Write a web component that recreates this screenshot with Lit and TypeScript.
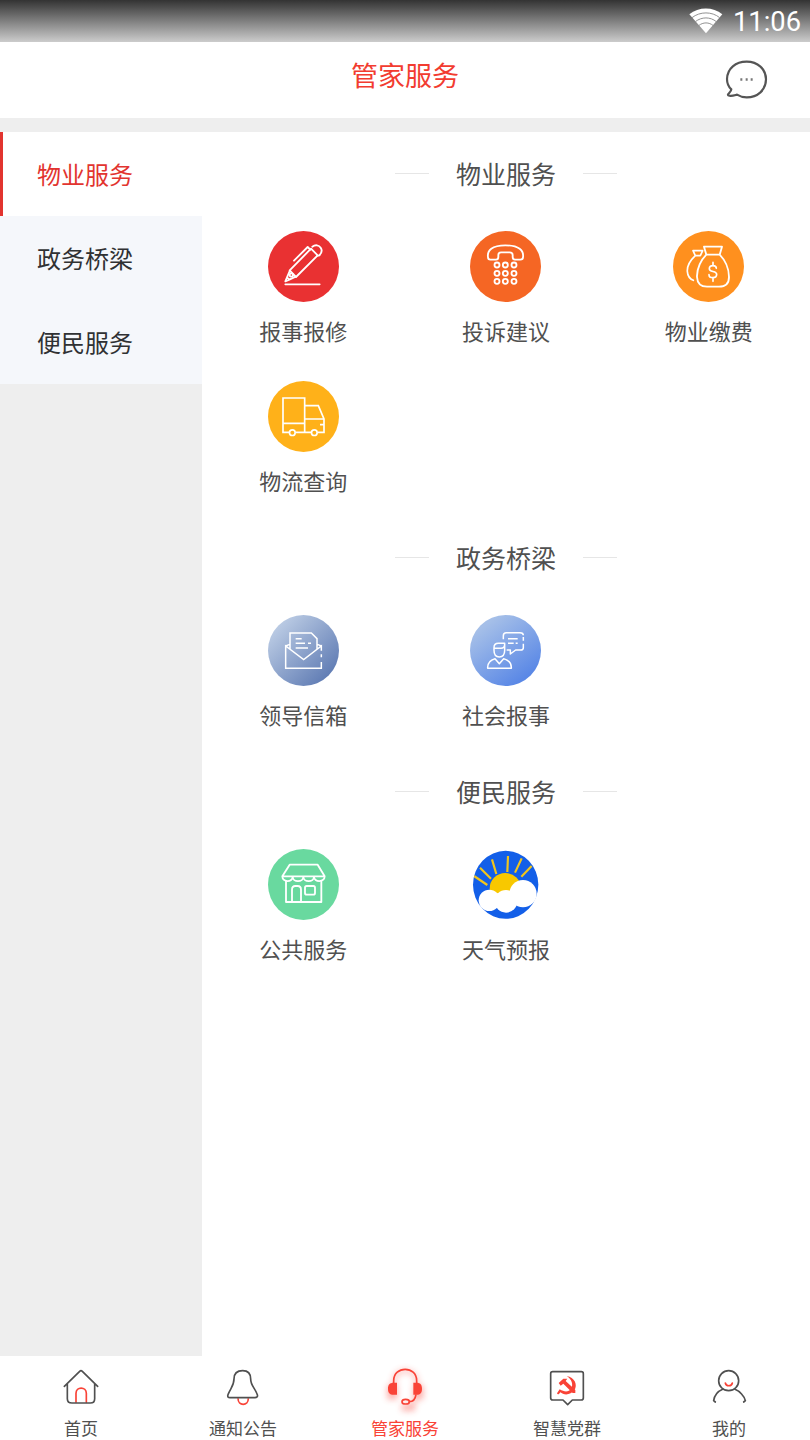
import { LitElement, html, css, svg } from "lit";
import { customElement, property, state } from "lit/decorators.js";
import { classMap } from "lit/directives/class-map.js";

interface Glyph {
  box: string;
  art: unknown;
}

const serviceGlyphs: Record<string, Glyph> = {
  repair: {
    box: "54 33 213 213",
    art: svg`<circle cx="160.500" cy="139.500" r="106.500" fill="#e93132"/>
      <g fill="none" stroke="#fff" stroke-width="5.500" stroke-linejoin="round" stroke-linecap="round">
        <path d="M106 193H209"/>
        <path d="M119 151L183 86L203 106L138 171Z"/>
        <path d="M132 122L173 81L181 89"/>
        <path d="M187 80C196 73 207 75 212 83C217 91 215 100 207 107L202 107"/>
        <path d="M119 153L111 172L118 179L137 170M111 172L106 184L118 179"/>
        <circle cx="124" cy="165" r="5"/>
      </g>`,
  },
  phone: {
    box: "60 33 213 213",
    art: svg`<circle cx="166.500" cy="139.500" r="106.500" fill="#f56624"/>
      <g fill="none" stroke="#fff" stroke-width="5.500" stroke-linejoin="round">
        <path d="M114 112C111 92 126 76 166 76C207 76 222 92 219 112C219 118 216 119 211 119H195C190 119 188 117 188 111V105C188 100 185 97 179 97H153C147 97 145 100 145 105V111C145 117 143 119 138 119H121C116 119 114 117 114 112Z"/>
        ${[135, 160, 184].map((y) => [141, 166, 192].map((x) => svg`<circle cx=${x} cy=${y} r="7.500"/>`))}
      </g>`,
  },
  money: {
    box: "54 33 213 213",
    art: svg`<circle cx="160.500" cy="139.500" r="106.500" fill="#ff901e"/>
      <g fill="none" stroke="#fff" stroke-width="5.500" stroke-linejoin="round" stroke-linecap="round">
        <path d="M154 104L147 80H201L194 104ZM154 104C139 119 125 145 126 171C127 190 137 200 156 200H192C212 200 222 190 222 171C222 145 209 119 194 104"/>
        <path d="M143 92H114L121 107H136L142 94M121 107C107 120 96 136 97 154C98 169 105 177 115 181" stroke-width="5"/>
        <path d="M184 145C184 140 180 137 174 137C167 137 163 140 163 146C163 158 185 151 185 163C185 170 180 173 174 173C167 173 162 170 162 164M174 127V137M174 173V184" stroke-width="5"/>
      </g>`,
  },
  truck: {
    box: "54 33 213 213",
    art: svg`<circle cx="160.500" cy="139.500" r="106.500" fill="#ffb119"/>
      <g fill="none" stroke="#fff" stroke-width="5">
        <path d="M118 187H99V84H164V187M99 160H164M137 187H184M164 107H205L222 147V187H203M164 147H222M210 164H222"/>
        <circle cx="127" cy="188" r="8.500"/><circle cx="193" cy="188" r="8.500"/>
      </g>`,
  },
  mail: {
    box: "54 30 213 213",
    art: svg`<defs><linearGradient id="m" x1=".12" y1=".12" x2=".85" y2=".85"><stop offset="0" stop-color="#bdcde5"/><stop offset="1" stop-color="#627eb5"/></linearGradient></defs>
      <circle cx="160.500" cy="136.500" r="106.500" fill="url(#m)"/>
      <g fill="none" stroke="#fff" stroke-width="4.500">
        <path d="M120 134V84H184L201 101V134M214 171V190H107V123L161 164L214 123V137M214 148V157M119 118L107 123M202 118L214 123"/>
        <path d="M137 101H155M137 115H165M174 115H183M137 129H174"/>
      </g>`,
  },
  report: {
    box: "60 30 213 213",
    art: svg`<defs><linearGradient id="r" x1=".2" y1=".15" x2=".75" y2=".9"><stop offset="0" stop-color="#a5bfe8"/><stop offset="1" stop-color="#5a88e6"/></linearGradient></defs>
      <circle cx="166.500" cy="136.500" r="106.500" fill="url(#r)"/>
      <g fill="none" stroke="#fff" stroke-width="4.500" stroke-linejoin="round">
        <path d="M132 128C132 119 137 115 145 115H164V136C164 148 158 156 148 156C137 156 132 148 132 136ZM132 130H153C160 130 164 125 164 118"/>
        <path d="M113 190C112 172 120 165 135 161L148 176L161 161C176 165 185 172 184 190Z"/>
        <path d="M160 103V92C160 86 163 83 169 83H210C216 83 220 85 220 91M220 96V107M220 116V128C220 133 217 135 212 135H197L181 147V135H170M174 101H203M174 115H191M197 115H203"/>
      </g>`,
  },
  shop: {
    box: "54 27 213 213",
    art: svg`<circle cx="160.500" cy="133.500" r="106.500" fill="#69d99f"/>
      <g fill="none" stroke="#fff" stroke-width="5.500" stroke-linejoin="round">
        <path d="M119 74H203L224 109H97ZM97 109C97 128 128 128 128 110C128 128 160 128 160 110C160 128 192 128 192 110C192 128 224 128 224 109"/>
        <path d="M108 122V186H214V122M126 186V149C126 141 129 138 136 138H143C150 138 153 141 153 149V186"/>
        <rect x="165" y="138" width="30" height="26" rx="5"/>
      </g>`,
  },
  weather: {
    box: "60 27 213 213",
    art: svg`<defs><clipPath id="w"><ellipse cx="167" cy="134.500" rx="98" ry="102"/></clipPath></defs>
      <ellipse cx="167" cy="134.500" rx="98" ry="102" fill="#135fe8"/>
      <g clip-path="url(#w)">
        <circle cx="166" cy="146" r="47" fill="#f8c800"/>
        <path d="M72 108L112 135M90 83L123 116M126 58L139 102M174 48L172 96M215 55L195 98M245 78L214 110" stroke="#f1c51c" stroke-width="6.500"/>
      </g>
      <g fill="#fff"><circle cx="118" cy="181" r="32"/><circle cx="168" cy="184" r="34"/><circle cx="219" cy="161" r="41"/><path d="M118 160H220V195H118Z"/></g>`,
  },
};

const tabGlyphs: Record<string, Glyph> = {
  home: {
    box: "63 18 180 168",
    art: svg`<g fill="none" stroke-width="5" stroke-linecap="round" stroke-linejoin="round">
      <path stroke="#f94337" d="M138 157V130C138 109 169 109 169 130V157"/>
      <path stroke="#505050" d="M103 109L149 64Q153 60 157 64L203 109M112 103V146C112 155 117 159 126 159H181C190 159 194 155 194 146V103"/></g>`,
  },
  bell: {
    box: "549 18 180 168",
    art: svg`<g fill="none" stroke-width="5" stroke-linejoin="round">
      <path stroke="#f94337" d="M624 145C624 169 655 169 655 145"/>
      <path stroke="#505050" d="M612 87C612 71 622 62 638 62C653 62 662 71 662 87C662 107 675 114 682 134C684 140 680 143 675 143H600C594 143 592 140 594 134C602 114 612 107 612 87Z"/></g>`,
  },
  headset: {
    box: "1035 18 180 168",
    art: svg`<defs><filter id="g" filterUnits="userSpaceOnUse" x="1035" y="18" width="180" height="190"><feGaussianBlur stdDeviation="10"/></filter></defs>
      <g filter="url(#g)" opacity=".42" fill="#f94337"><path d="M1072 106h30v42h-30ZM1150 106h30v42h-30ZM1115 162h40v20h-40Z"/><path d="M1092 108V96C1092 52 1160 52 1160 96V108M1160 140C1156 155 1150 165 1138 166" fill="none" stroke="#f94337" stroke-width="9"/></g>
      <g fill="none" stroke="#f94337" stroke-width="5">
      <path d="M1091 100V92C1091 47 1160 47 1160 92V100M1158 133C1156 148 1149 155 1138 155"/>
      <ellipse cx="1127" cy="155" rx="11" ry="7"/>
      <path fill="#f94337" stroke="none" d="M1101 98V134H1091C1079 134 1074 128 1074 116C1074 104 1079 98 1091 98ZM1150 98V134H1160C1171 134 1176 128 1176 116C1176 104 1171 98 1160 98Z"/></g>`,
  },
  party: {
    box: "261 18 180 168",
    art: svg`<path fill="none" stroke="#505050" stroke-width="5" stroke-linejoin="round" d="M308 65H394Q400 65 400 71V144Q400 150 394 150H367L353 164L339 150H308Q302 150 302 144V71Q302 65 308 65Z"/>
      <g fill="#f94337"><path d="M326 99L340 86H352L347 93L376 120V129H368L340 101L332 107Z"/>
      <path d="M350 78C374 82 384 104 373 121C362 136 341 136 331 127L327 132C323 135 319 131 323 127L329 118C344 127 356 126 363 117C371 104 365 87 350 78Z"/></g>`,
  },
  me: {
    box: "747 18 180 168",
    art: svg`<g fill="none" stroke-width="5" stroke-linecap="round">
      <circle cx="836" cy="92" r="30" stroke="#505050"/>
      <path stroke="#f94337" d="M826 99C828 110 845 110 847 99"/>
      <path stroke="#505050" d="M818 118C804 124 793 138 791 152L796 156M855 118C869 124 883 138 886 152L881 156"/></g>`,
  },
};

@customElement("service-entry")
class ServiceEntry extends LitElement {
  static styles = css`
    :host { display: flex; flex-direction: column; align-items: center; height: 150px; padding-top: 15px; box-sizing: border-box; }
    .glyph { width: 71px; height: 71px; display: block; flex: none; }
    .name { margin-top: 12px; font-size: 22px; line-height: 32px; color: #505050; white-space: nowrap; }
  `;
  @property() icon = "";
  @property() label = "";
  render() {
    const g = serviceGlyphs[this.icon];
    return html`<svg class="glyph" viewBox=${g.box}>${g.art}</svg><span class="name">${this.label}</span>`;
  }
}

@customElement("tab-entry")
class TabEntry extends LitElement {
  static styles = css`
    :host { display: flex; flex-direction: column; align-items: center; }
    .glyph { width: 60px; height: 56px; display: block; flex: none; overflow: visible; }
    .name { margin-top: 3px; font-size: 17px; line-height: 25px; color: #505050; white-space: nowrap; }
    .active { color: #f94337; }
  `;
  @property() icon = "";
  @property() label = "";
  @property({ type: Boolean }) active = false;
  render() {
    const g = tabGlyphs[this.icon];
    return html`<svg class="glyph" viewBox=${g.box}>${g.art}</svg>
      <span class=${classMap({ name: true, active: this.active })}>${this.label}</span>`;
  }
}

@customElement("app-root")
class AppRoot extends LitElement {
  static styles = css`
    :host { display: flex; flex-direction: column; width: 810px; height: 1440px; overflow: hidden; background: #fff; font-family: "Noto Sans CJK SC", sans-serif; }
    .status { height: 42px; flex: none; display: flex; align-items: center; justify-content: flex-end; gap: 10px; padding-right: 9px; box-sizing: border-box; background: linear-gradient(#333, #ccc); color: #fff; font: 27.3px/42px Roboto, sans-serif; }
    .time { padding-top: 2px; line-height: 40px; }
    .wifi { width: 34px; height: 26px; display: block; }
    .header { height: 76px; flex: none; display: grid; grid-template-columns: 1fr auto 1fr; }
    .title { grid-column: 2; font-size: 27px; line-height: 66px; color: #f23c30; }
    .chat { width: 60px; height: 60px; margin: 7px 34px 0 0; justify-self: end; }
    .main { flex: 1; min-height: 0; display: grid; grid-template-columns: 202px 1fr; border-top: 14px solid #eee; }
    .side { background: #eee; }
    .cat { height: 84px; line-height: 83px; padding-left: 37px; box-sizing: border-box; font-size: 24px; color: #303133; background: #f5f7fb; }
    .cat.on { background: #fff; color: #e2342f; border-left: 3px solid #e2342f; padding-left: 34px; }
    .head { height: 84px; padding-bottom: 2px; box-sizing: border-box; display: flex; align-items: center; justify-content: center; gap: 27px; font-size: 25px; color: #505050; line-height: 82px; }
    .head::before, .head::after { content: ""; width: 34px; height: 1px; background: #e6e6e6; }
    .grid { display: grid; grid-template-columns: repeat(3, 1fr); }
    .tabs { height: 84px; flex: none; display: grid; grid-template-columns: repeat(5, 1fr); }
  `;

  @state() private current = 0;

  private sections = [
    { name: "物业服务", items: [["repair", "报事报修"], ["phone", "投诉建议"], ["money", "物业缴费"], ["truck", "物流查询"]] },
    { name: "政务桥梁", items: [["mail", "领导信箱"], ["report", "社会报事"]] },
    { name: "便民服务", items: [["shop", "公共服务"], ["weather", "天气预报"]] },
  ];

  private tabs = [["home", "首页"], ["bell", "通知公告"], ["headset", "管家服务"], ["party", "智慧党群"], ["me", "我的"]];

  render() {
    return html`
      <div class="status">
        <svg class="wifi" viewBox="237 24 102 78">
          <path fill="#fff" d="M238 43C266 20 309 20 337 43L288 100Z"/>
          <path fill="none" stroke="#929292" stroke-width="3" d="M246 53C270 34 306 34 329 53M256 65C275 50 301 50 319 65M266 77C279 66 297 66 310 77"/>
        </svg>
        <span class="time">11:06</span>
      </div>
      <div class="header">
        <span class="title">管家服务</span>
        <svg class="chat" viewBox="318 147 180 180">
          <path fill="none" stroke="#555" stroke-width="6.500" stroke-linejoin="round" d="M364 268C355 260 351 249 351 237C352 205 377 185 410 185C443 185 468 207 468 238C468 270 443 292 410 292C399 292 389 289 381 284C373 286 362 290 355 286C350 282 364 277 364 268Z"/>
          <path fill="#777" d="M391 235h6v7h-6ZM407 235h6v7h-6ZM422 235h6v7h-6Z"/>
        </svg>
      </div>
      <div class="main">
        <div class="side">
          ${this.sections.map((s, i) => html`<div class=${classMap({ cat: true, on: i === this.current })} @click=${() => (this.current = i)}>${s.name}</div>`)}
        </div>
        <div>
          ${this.sections.map((s) => html`
            <div class="head">${s.name}</div>
            <div class="grid">${s.items.map(([icon, label]) => html`<service-entry icon=${icon} label=${label}></service-entry>`)}</div>`)}
        </div>
      </div>
      <div class="tabs">
        ${this.tabs.map(([icon, label]) => html`<tab-entry icon=${icon} label=${label} ?active=${icon === "headset"}></tab-entry>`)}
      </div>`;
  }
}
